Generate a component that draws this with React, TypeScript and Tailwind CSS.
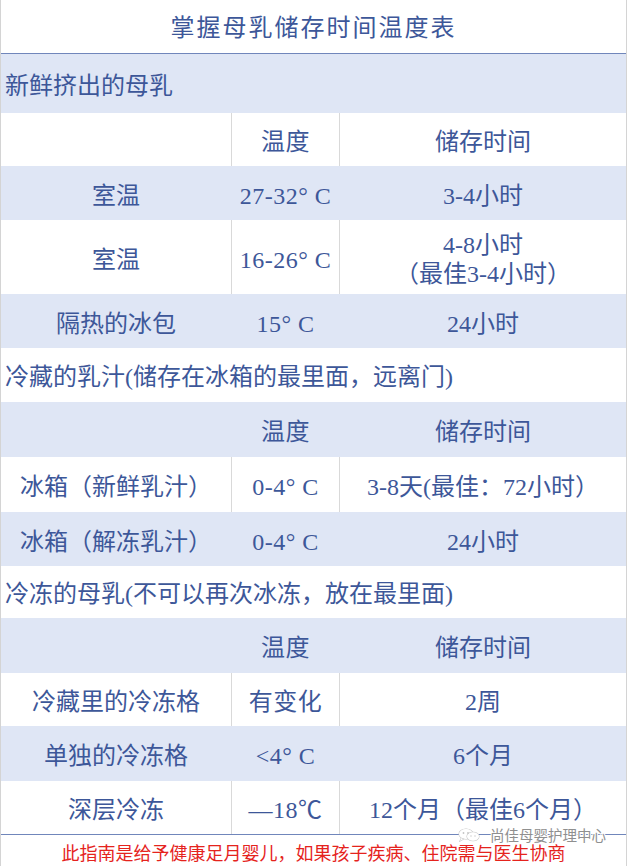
type Row =
  | { kind: "section"; text: string; h: string; bg: "blue" | "white" }
  | { kind: "data"; cells: React.ReactNode[]; h: string; bg: "blue" | "white" };

const rows: Row[] = [
  { kind: "section", text: "新鲜挤出的母乳", h: "h-[59px]", bg: "blue" },
  { kind: "data", cells: ["", "温度", "储存时间"], h: "h-[53px]", bg: "white" },
  { kind: "data", cells: ["室温", "27-32° C", "3-4小时"], h: "h-[54px]", bg: "blue" },
  {
    kind: "data",
    cells: [
      "室温",
      "16-26° C",
      <div className="flex flex-col items-center leading-[29px]">
        <span>4-8小时</span>
        <span>（最佳3-4小时）</span>
      </div>,
    ],
    h: "h-[74px]",
    bg: "white",
  },
  { kind: "data", cells: ["隔热的冰包", "15° C", "24小时"], h: "h-[54px]", bg: "blue" },
  { kind: "section", text: "冷藏的乳汁(储存在冰箱的最里面，远离门)", h: "h-[54px]", bg: "white" },
  { kind: "data", cells: ["", "温度", "储存时间"], h: "h-[55px]", bg: "blue" },
  { kind: "data", cells: ["冰箱（新鲜乳汁）", "0-4° C", "3-8天(最佳：72小时）"], h: "h-[55px]", bg: "white" },
  { kind: "data", cells: ["冰箱（解冻乳汁）", "0-4° C", "24小时"], h: "h-[54px]", bg: "blue" },
  { kind: "section", text: "冷冻的母乳(不可以再次冰冻，放在最里面)", h: "h-[52px]", bg: "white" },
  { kind: "data", cells: ["", "温度", "储存时间"], h: "h-[55px]", bg: "blue" },
  { kind: "data", cells: ["冷藏里的冷冻格", "有变化", "2周"], h: "h-[53px]", bg: "white" },
  { kind: "data", cells: ["单独的冷冻格", "<4° C", "6个月"], h: "h-[55px]", bg: "blue" },
  { kind: "data", cells: ["深层冷冻", "—18℃", "12个月（最佳6个月）"], h: "h-[53px]", bg: "white" },
];

function WeChatMark() {
  return (
    <svg width="28" height="14" viewBox="0 0 28 14" fill="none" stroke="#c4c4c4" strokeWidth="1.1">
      <ellipse cx="10" cy="6" rx="7" ry="5" fill="white" />
      <path d="M5 10.5 L4 13 L7.5 11" fill="white" />
      <ellipse cx="17" cy="8.5" rx="6" ry="4.2" fill="white" />
      <circle cx="7.5" cy="5" r="0.9" fill="#c4c4c4" stroke="none" />
      <circle cx="12" cy="5" r="0.9" fill="#c4c4c4" stroke="none" />
      <circle cx="15" cy="8" r="0.7" fill="#c4c4c4" stroke="none" />
      <circle cx="19" cy="8" r="0.7" fill="#c4c4c4" stroke="none" />
    </svg>
  );
}

export default function App() {
  return (
    <div className="w-[629px] h-[866px] bg-white overflow-hidden text-[#3d5799] font-['Liberation_Serif','Noto_Sans_CJK_SC',serif]">
      <div className="relative w-[627px] h-[866px] border-x border-[#d4d4d4] flex flex-col">
        <div className="h-[54px] border-b border-[#7086bb] flex items-center justify-center text-[24px] tracking-[2px] pt-[2px]">
          掌握母乳储存时间温度表
        </div>
        {rows.map((r, i) => {
          const bg = r.bg === "blue" ? "bg-[#dfe6f5]" : "bg-white";
          const div = r.bg === "blue" ? "border-[#dfe6f5]" : "border-[#d9d9d9]";
          if (r.kind === "section") {
            return (
              <div key={i} className={`${r.h} ${bg} flex items-center pl-[4px] pt-[4px] text-[24px]`}>
                {r.text}
              </div>
            );
          }
          return (
            <div key={i} className={`${r.h} ${bg} grid grid-cols-[230px_108px_1fr] text-[24px]`}>
              <div className="flex items-center justify-center pt-[5px]">{r.cells[0]}</div>
              <div className={`flex items-center justify-center pt-[5px] tracking-[0.5px] border-l ${div}`}>{r.cells[1]}</div>
              <div className={`flex items-center justify-center pt-[5px] border-l ${div}`}>{r.cells[2]}</div>
            </div>
          );
        })}
        <div className="h-[32px] border-t border-[#7086bb] flex items-center justify-center font-['Noto_Sans_CJK_SC',sans-serif] text-[18px] text-[#e5231d] pt-[3px]">
          此指南是给予健康足月婴儿，如果孩子疾病、住院需与医生协商
        </div>
        <div className="absolute left-[455px] top-[828px] flex items-center gap-[6px] whitespace-nowrap text-[14.5px] leading-[14px] text-[#8f8f8f] font-['Noto_Sans_CJK_SC',sans-serif] [paint-order:stroke] [-webkit-text-stroke:2px_white]">
          <WeChatMark />
          <span>尚佳母婴护理中心</span>
        </div>
      </div>
    </div>
  );
}
